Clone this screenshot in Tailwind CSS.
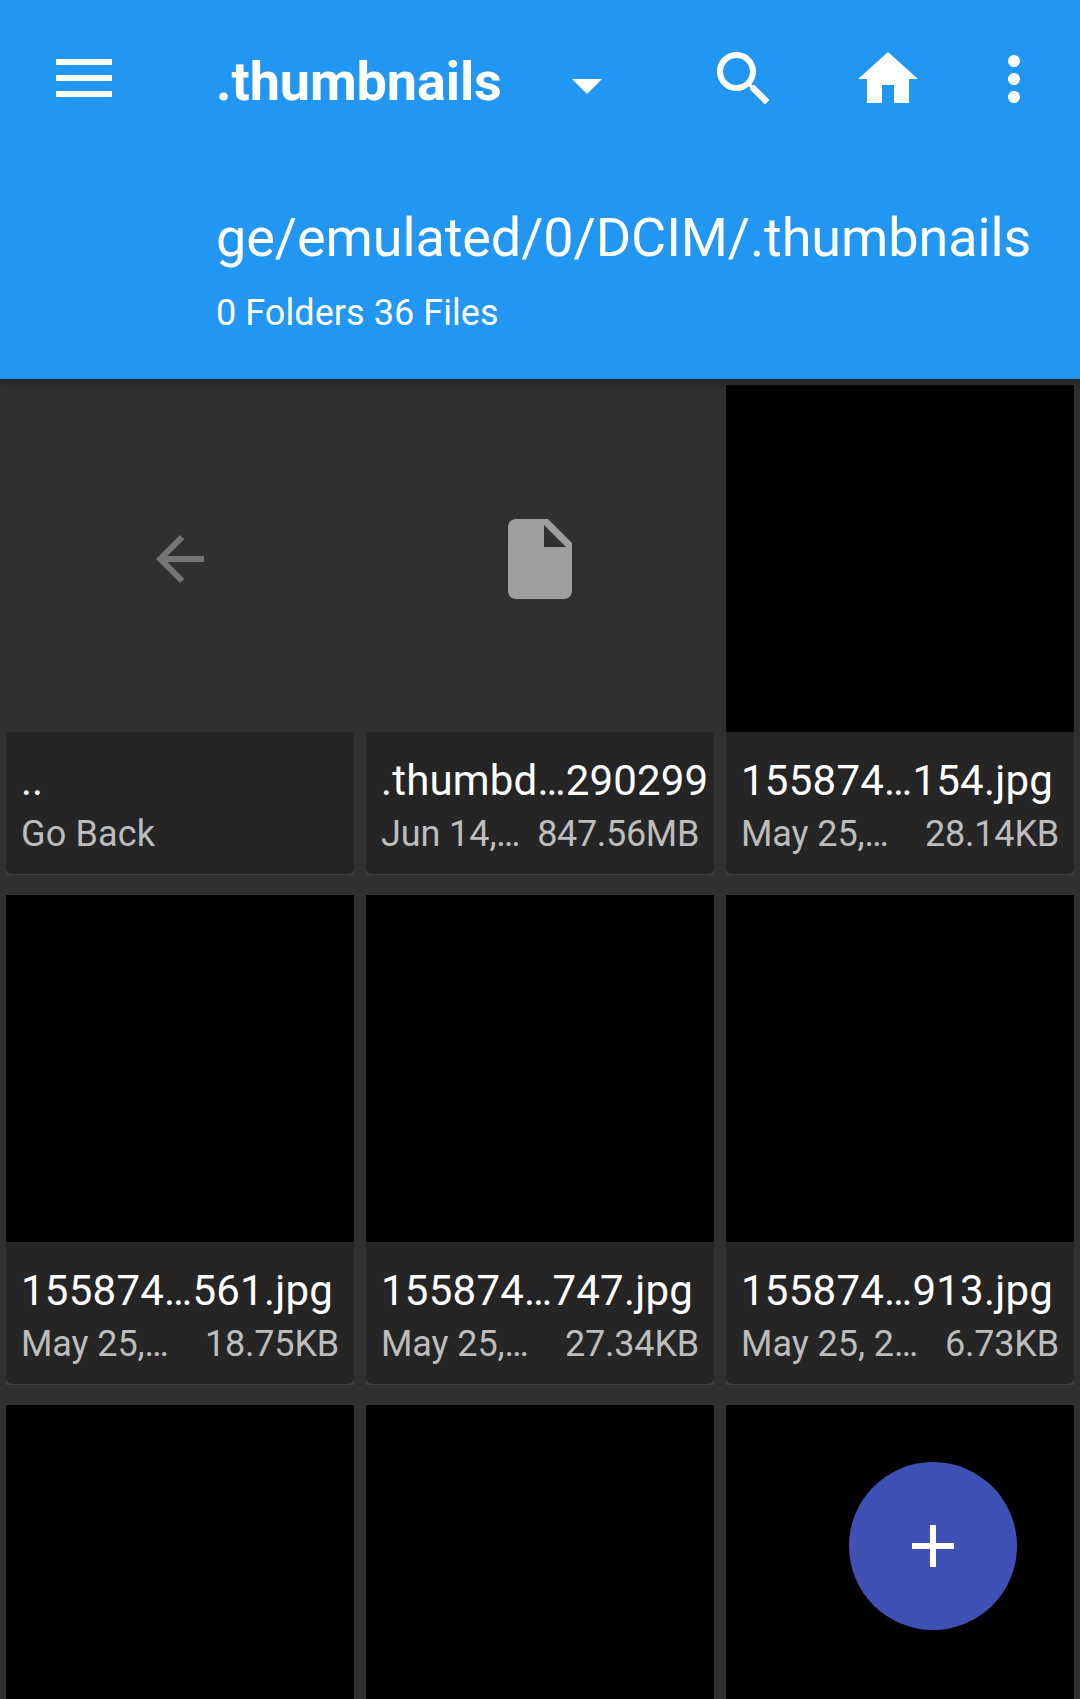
<!DOCTYPE html>
<html lang="en">
<head>
<meta charset="utf-8">
<title>.thumbnails</title>
<script src="https://cdn.jsdelivr.net/npm/@tailwindcss/browser@4"></script>
</head>
<body class="h-[1699px] w-[1080px] overflow-hidden bg-[#303030] font-['Roboto',sans-serif] text-white">
<header class="relative h-[379px] bg-[#2196f3] shadow-[0_3px_12px_rgba(0,0,0,0.35)]">
  <div class="flex h-[206px] items-start pl-14">
    <svg class="mt-[59px] h-[38px] w-14" viewBox="0 0 56 38" fill="currentColor"><path d="M0 0h56v6H0zM0 16h56v6H0zM0 32h56v6H0z"/></svg>
    <h1 class="mt-[50px] ml-[104px] w-[335px] text-[54px] leading-[64px] font-bold tracking-[-0.12px] whitespace-nowrap">.thumbnails</h1>
    <svg class="mt-[49px] size-[72px] shrink-0" viewBox="0 0 24 24" fill="currentColor"><path d="M7 10l5 5 5-5z"/></svg>
    <svg class="mt-[43px] ml-[85px] size-[72px] shrink-0" viewBox="0 0 24 24" fill="currentColor"><path d="M15.5 14h-.79l-.28-.27C15.41 12.59 16 11.11 16 9.5 16 5.91 13.09 3 9.5 3S3 5.91 3 9.5 5.91 16 9.5 16c1.61 0 3.09-.59 4.23-1.57l.27.28v.79l5 4.99L20.49 19l-4.99-5zm-6 0C7.01 14 5 11.99 5 9.5S7.01 5 9.5 5 14 7.01 14 9.5 11.99 14 9.5 14z"/></svg>
    <svg class="mt-[43px] ml-[72px] size-[72px] shrink-0" viewBox="0 0 24 24" fill="currentColor"><path d="M10 20v-6h4v6h5v-8h3L12 3 2 12h3v8z"/></svg>
    <svg class="mt-[43px] ml-[54px] size-[72px] shrink-0" viewBox="0 0 24 24" fill="currentColor"><path d="M12 8c1.1 0 2-.9 2-2s-.9-2-2-2-2 .9-2 2 .9 2 2 2zm0 2c-1.1 0-2 .9-2 2s.9 2 2 2 2-.9 2-2-.9-2-2-2zm0 6c-1.1 0-2 .9-2 2s.9 2 2 2 2-.9 2-2-.9-2-2-2z"/></svg>
  </div>
  <div class="pl-[216px] whitespace-nowrap">
    <p class="text-[54px] leading-[64px] tracking-[-0.1px]">ge/emulated/0/DCIM/.thumbnails</p>
    <p class="mt-[22px] text-[36px] leading-[42px] tracking-[0.06px]">0 Folders 36 Files</p>
  </div>
</header>

<main class="grid grid-cols-3 gap-x-3 gap-y-5 px-1.5 pt-1.5">
  <article class="h-[490px]">
    <div class="flex h-[347px] items-center justify-center pt-px"><svg class="size-[72px] text-[#757575]" viewBox="0 0 24 24" fill="currentColor"><path d="M20 11H7.83l5.59-5.59L12 4l-8 8 8 8 1.41-1.41L7.83 13H20v-2z"/></svg></div>
    <div class="h-[143px] bg-[#404040]"><div class="h-[142px] rounded-b-md bg-[#252525] px-[15px] pt-6 whitespace-nowrap">
      <p class="text-[42px] leading-[50px]">..</p>
      <p class="mt-[7px] text-[36px] leading-[42px] tracking-[0.15px] text-[#bdbdbd]">Go Back</p>
    </div></div>
  </article>
  <article class="h-[490px]">
    <div class="flex h-[347px] items-center justify-center pt-px"><svg class="size-24 text-[#9e9e9e]" viewBox="0 0 24 24" fill="currentColor"><path d="M6 2c-1.1 0-1.99.9-1.99 2L4 20c0 1.1.89 2 1.99 2H18c1.1 0 2-.9 2-2V8l-6-6H6zm7 7V3.5L18.5 9H13z"/></svg></div>
    <div class="h-[143px] bg-[#404040]"><div class="h-[142px] rounded-b-md bg-[#252525] px-[15px] pt-6 whitespace-nowrap">
      <p class="text-[42px] leading-[50px] tracking-[0.17px]">.thumbd…290299</p>
      <p class="mt-[7px] flex justify-between text-[36px] leading-[42px] text-[#bdbdbd]"><span class="tracking-[-0.1px]">Jun 14,…</span><span class="tracking-[-0.33px]">847.56MB</span></p>
    </div></div>
  </article>
  <article class="h-[490px]">
    <div class="h-[347px] bg-black"></div>
    <div class="h-[143px] bg-[#404040]"><div class="h-[142px] rounded-b-md bg-[#252525] px-[15px] pt-6 whitespace-nowrap">
      <p class="text-[42px] leading-[50px] tracking-[0.24px]">155874…154.jpg</p>
      <p class="mt-[7px] flex justify-between text-[36px] leading-[42px] text-[#bdbdbd]"><span class="tracking-[-0.1px]">May 25,…</span><span class="tracking-[-0.2px]">28.14KB</span></p>
    </div></div>
  </article>
  <article class="h-[490px]">
    <div class="h-[347px] bg-black"></div>
    <div class="h-[143px] bg-[#404040]"><div class="h-[142px] rounded-b-md bg-[#252525] px-[15px] pt-6 whitespace-nowrap">
      <p class="text-[42px] leading-[50px] tracking-[0.24px]">155874…561.jpg</p>
      <p class="mt-[7px] flex justify-between text-[36px] leading-[42px] text-[#bdbdbd]"><span class="tracking-[-0.1px]">May 25,…</span><span class="tracking-[-0.2px]">18.75KB</span></p>
    </div></div>
  </article>
  <article class="h-[490px]">
    <div class="h-[347px] bg-black"></div>
    <div class="h-[143px] bg-[#404040]"><div class="h-[142px] rounded-b-md bg-[#252525] px-[15px] pt-6 whitespace-nowrap">
      <p class="text-[42px] leading-[50px] tracking-[0.24px]">155874…747.jpg</p>
      <p class="mt-[7px] flex justify-between text-[36px] leading-[42px] text-[#bdbdbd]"><span class="tracking-[-0.1px]">May 25,…</span><span class="tracking-[-0.2px]">27.34KB</span></p>
    </div></div>
  </article>
  <article class="h-[490px]">
    <div class="h-[347px] bg-black"></div>
    <div class="h-[143px] bg-[#404040]"><div class="h-[142px] rounded-b-md bg-[#252525] px-[15px] pt-6 whitespace-nowrap">
      <p class="text-[42px] leading-[50px] tracking-[0.24px]">155874…913.jpg</p>
      <p class="mt-[7px] flex justify-between text-[36px] leading-[42px] text-[#bdbdbd]"><span class="tracking-[-0.05px]">May 25, 2…</span><span class="tracking-[-0.2px]">6.73KB</span></p>
    </div></div>
  </article>
  <div class="h-[294px] bg-black"></div>
  <div class="h-[294px] bg-black"></div>
  <div class="h-[294px] bg-black"></div>
</main>

<button class="fixed top-[1462px] left-[849px] flex size-[168px] items-center justify-center rounded-full bg-[#3f51b5]" aria-label="Add">
  <svg class="size-[72px]" viewBox="0 0 24 24" fill="currentColor"><path d="M19 13h-6v6h-2v-6H5v-2h6V5h2v6h6v2z"/></svg>
</button>
</body>
</html>
